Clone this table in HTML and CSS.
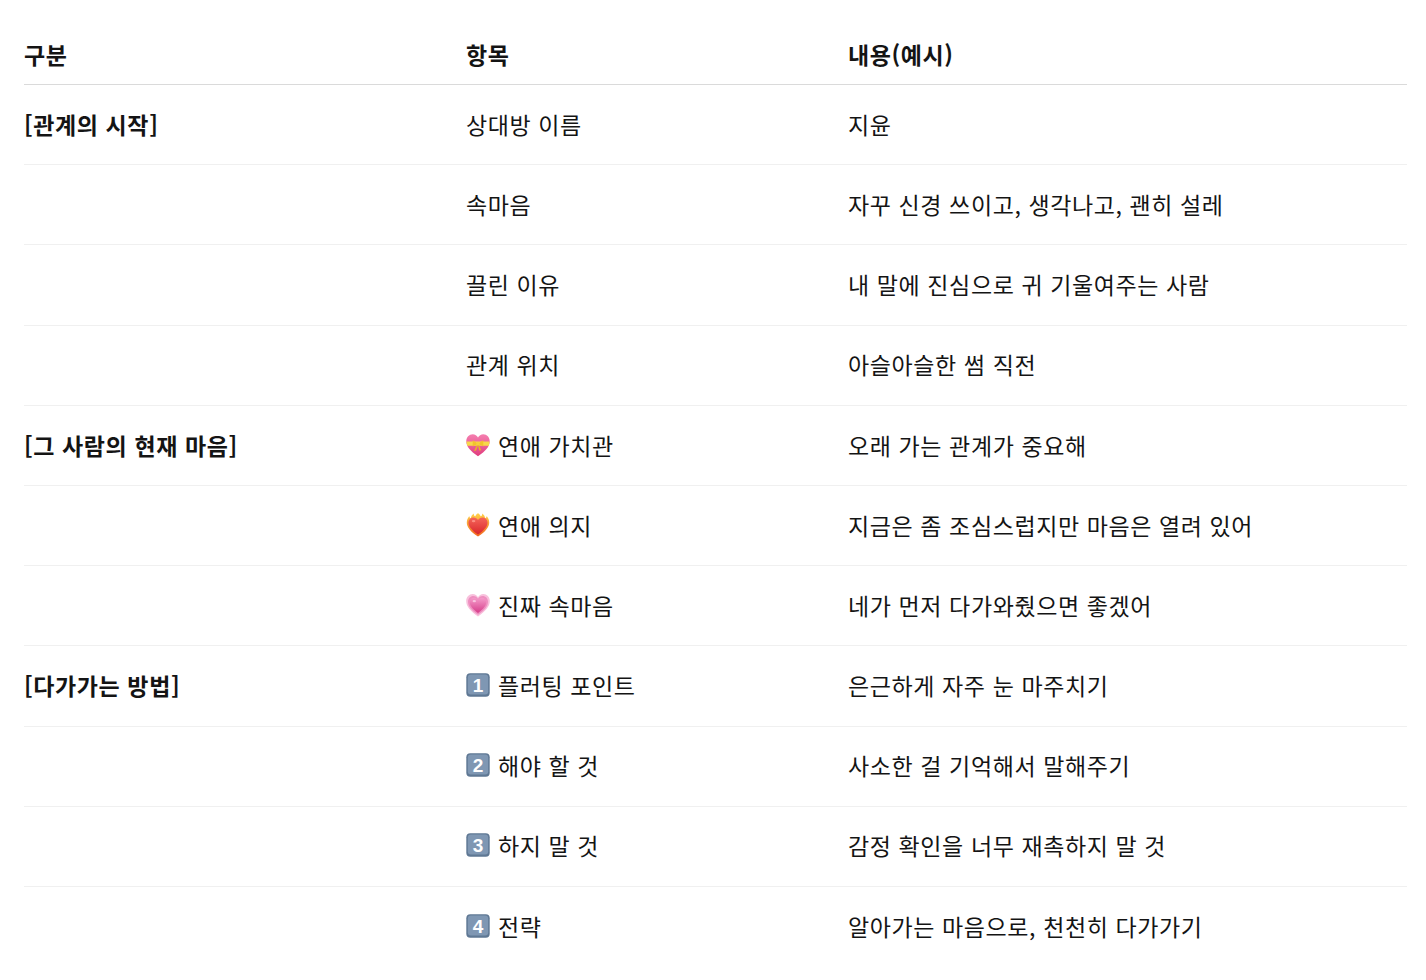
FILE: index.html
```html
<!DOCTYPE html>
<html lang="ko">
<head>
<meta charset="utf-8">
<title>관계 표</title>
<link rel="stylesheet" href="styles.css">
</head>
<body>
<div class="wrap">
<table class="tbl">
  <colgroup><col class="c1"><col class="c2"><col class="c3"></colgroup>
  <thead>
    <tr><th>구분</th><th>항목</th><th>내용(예시)</th></tr>
  </thead>
  <tbody>
    <tr><td class="cat">[관계의 시작]</td><td>상대방 이름</td><td>지윤</td></tr>
    <tr><td></td><td>속마음</td><td>자꾸 신경 쓰이고, 생각나고, 괜히 설레</td></tr>
    <tr><td></td><td>끌린 이유</td><td>내 말에 진심으로 귀 기울여주는 사람</td></tr>
    <tr><td></td><td>관계 위치</td><td>아슬아슬한 썸 직전</td></tr>
    <tr><td class="cat">[그 사람의 현재 마음]</td><td><span class="item"><svg class="emo" viewBox="0 0 24 24"><defs><linearGradient id="gp1" x1="0" y1="0" x2="0" y2="1"><stop offset="0" stop-color="#f57fb0"/><stop offset="1" stop-color="#e03d7e"/></linearGradient></defs><path d="M12 23.2C4.3 18 0.3 13.4 0.3 8.2C0.3 4.2 3.1 1.2 6.7 1.2C9.1 1.2 11 2.6 12 4.6C13 2.6 14.9 1.2 17.3 1.2C20.9 1.2 23.7 4.2 23.7 8.2C23.7 13.4 19.7 18 12 23.2Z" fill="url(#gp1)"/><path d="M0.4 8.6L23.6 8.6L22.9 12.8L1.2 12.8Z" fill="#f7d84a"/><path d="M12 10.7L6.8 7.2L6.6 13.6Z" fill="#f2c12e"/><path d="M12 10.7L17.2 7.2L17.4 13.6Z" fill="#f2c12e"/><path d="M11.4 11L8 18L10.1 17.6L12 12Z" fill="#e9b325"/><path d="M12.6 11L15.2 17.2L13.2 17.4L12 12Z" fill="#e9b325"/><circle cx="12" cy="10.8" r="1.7" fill="#f5cf3a"/></svg><span>연애 가치관</span></span></td><td>오래 가는 관계가 중요해</td></tr>
    <tr><td></td><td><span class="item"><svg class="emo" viewBox="0 0 24 24"><defs><linearGradient id="gf" x1="0" y1="0" x2="0" y2="1"><stop offset="0" stop-color="#ffd24a"/><stop offset="1" stop-color="#f2651e"/></linearGradient><linearGradient id="gr" x1="0" y1="0" x2="0" y2="1"><stop offset="0" stop-color="#f5665a"/><stop offset="1" stop-color="#d9262a"/></linearGradient></defs><path d="M12 23.6C4.5 18.6 0.6 13.9 0.8 9.2C1 6.2 2.3 4.6 3.3 3.1C3.4 4.5 4.1 5.1 4.8 5.2C5 3.3 6.2 1.5 7.8 0.4C7.6 2 8.4 2.9 9.4 3.2C9.8 1.9 10.8 0.7 12 0.2C13.2 0.7 14.2 1.9 14.6 3.2C15.6 2.9 16.4 2 16.2 0.4C17.8 1.5 19 3.3 19.2 5.2C19.9 5.1 20.6 4.5 20.7 3.1C21.7 4.6 23 6.2 23.2 9.2C23.4 13.9 19.5 18.6 12 23.6Z" fill="url(#gf)"/><path d="M12 21.6C5.6 17.2 2.5 13.4 2.5 9.5C2.5 6.6 4.8 4.4 7.5 4.4C9.5 4.4 11.1 5.5 12 7.1C12.9 5.5 14.5 4.4 16.5 4.4C19.2 4.4 21.5 6.6 21.5 9.5C21.5 13.4 18.4 17.2 12 21.6Z" fill="url(#gr)"/><ellipse cx="7.6" cy="8.1" rx="1.8" ry="1.2" fill="#ff9c8e" opacity="0.8"/></svg><span>연애 의지</span></span></td><td>지금은 좀 조심스럽지만 마음은 열려 있어</td></tr>
    <tr><td></td><td><span class="item"><svg class="emo" viewBox="0 0 24 24"><defs><linearGradient id="gp3" x1="0" y1="0" x2="0" y2="1"><stop offset="0" stop-color="#f59ccb"/><stop offset="1" stop-color="#d63d8a"/></linearGradient></defs><path d="M12 23.4C4.3 18.1 0.2 13.3 0.2 8C0.2 4.1 3.1 1 6.7 1C9.1 1 11 2.4 12 4.3C13 2.4 14.9 1 17.3 1C20.9 1 23.8 4.1 23.8 8C23.8 13.3 19.7 18.1 12 23.4Z" fill="#f8c0dc"/><path d="M12 21.7C5.3 17.1 2 13 2 8.7C2 5.4 4.5 3 7.3 3C9.4 3 11.1 4.1 12 5.8C12.9 4.1 14.6 3 16.7 3C19.5 3 22 5.4 22 8.7C22 13 18.7 17.1 12 21.7Z" fill="#ee8fc0"/><path d="M12 20C6.4 16.1 3.8 12.6 3.8 9.1C3.8 6.5 5.8 4.7 8 4.7C9.7 4.7 11.2 5.7 12 7.1C12.8 5.7 14.3 4.7 16 4.7C18.2 4.7 20.2 6.5 20.2 9.1C20.2 12.6 17.6 16.1 12 20Z" fill="url(#gp3)"/><ellipse cx="8.3" cy="8.2" rx="1.7" ry="1.1" fill="#fbd2e7" opacity="0.8"/></svg><span>진짜 속마음</span></span></td><td>네가 먼저 다가와줬으면 좋겠어</td></tr>
    <tr><td class="cat">[다가가는 방법]</td><td><span class="item"><svg class="emo" viewBox="0 0 24 24"><rect x="0.3" y="0.3" width="23.4" height="23.4" rx="4" class="kc"/><rect x="1.8" y="1.6" width="20.4" height="20" rx="3" class="kc2"/><text x="12" y="18.6" class="kt">1</text></svg><span>플러팅 포인트</span></span></td><td>은근하게 자주 눈 마주치기</td></tr>
    <tr><td></td><td><span class="item"><svg class="emo" viewBox="0 0 24 24"><rect x="0.3" y="0.3" width="23.4" height="23.4" rx="4" class="kc"/><rect x="1.8" y="1.6" width="20.4" height="20" rx="3" class="kc2"/><text x="12" y="18.6" class="kt">2</text></svg><span>해야 할 것</span></span></td><td>사소한 걸 기억해서 말해주기</td></tr>
    <tr><td></td><td><span class="item"><svg class="emo" viewBox="0 0 24 24"><rect x="0.3" y="0.3" width="23.4" height="23.4" rx="4" class="kc"/><rect x="1.8" y="1.6" width="20.4" height="20" rx="3" class="kc2"/><text x="12" y="18.6" class="kt">3</text></svg><span>하지 말 것</span></span></td><td>감정 확인을 너무 재촉하지 말 것</td></tr>
    <tr><td></td><td><span class="item"><svg class="emo" viewBox="0 0 24 24"><rect x="0.3" y="0.3" width="23.4" height="23.4" rx="4" class="kc"/><rect x="1.8" y="1.6" width="20.4" height="20" rx="3" class="kc2"/><text x="12" y="18.6" class="kt">4</text></svg><span>전략</span></span></td><td>알아가는 마음으로, 천천히 다가가기</td></tr>
  </tbody>
</table>
</div>
</body>
</html>
```

FILE: styles.css
```css
html, body {
  margin: 0;
  padding: 0;
  background: #ffffff;
}
body {
  font-family: "Noto Sans CJK KR", "Noto Sans", sans-serif;
  color: #141414;
}
.wrap {
  padding: 24px 19px 0 24px;
}
.tbl {
  width: 100%;
  border-collapse: collapse;
  table-layout: fixed;
  font-size: 23px;
  letter-spacing: 0.6px;
}
.c1 { width: 442px; }
.c2 { width: 382px; }
.tbl th {
  text-align: left;
  font-weight: 700;
  line-height: 22px;
  padding: 19px 0 19px 0;
  border-bottom: 1px solid #dadada;
  vertical-align: middle;
}
.tbl td {
  line-height: 22px;
  height: 22px;
  padding: 27.8px 0 29.4px 0;
  border-bottom: 1px solid #f0f0f0;
  vertical-align: middle;
  white-space: nowrap;
}
.tbl tbody tr:last-child td {
  border-bottom: none;
}
.tbl td.cat {
  font-weight: 700;
}
.item {
  display: flex;
  align-items: center;
  gap: 8px;
  height: 22px;
}
.emo {
  width: 24px;
  height: 24px;
  flex: none;
  margin: -1px 0;
}
.kc { fill: #5f7894; }
.kc2 { fill: #7f97b3; }
.kt {
  fill: #ffffff;
  font-family: "Liberation Sans", Arial, sans-serif;
  font-weight: 700;
  font-size: 19px;
  letter-spacing: 0;
  text-anchor: middle;
}
```
